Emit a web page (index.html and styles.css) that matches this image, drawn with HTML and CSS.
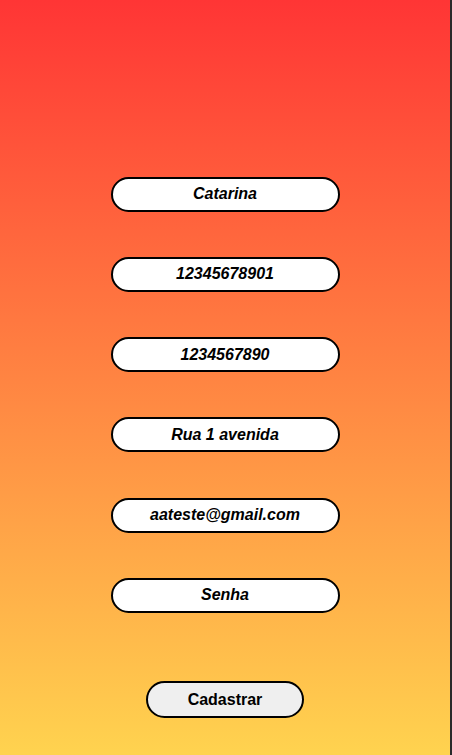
FILE: index.html
```html
<!DOCTYPE html>
<html lang="pt">
<head>
<meta charset="utf-8">
<title>Cadastro</title>
<link rel="stylesheet" href="styles.css">
</head>
<body>
<main class="page">
  <form class="form">
    <div class="field">Catarina</div>
    <div class="field">12345678901</div>
    <div class="field">1234567890</div>
    <div class="field">Rua 1 avenida</div>
    <div class="field">aateste@gmail.com</div>
    <div class="field">Senha</div>
    <button type="button" class="submit">Cadastrar</button>
  </form>
</main>
</body>
</html>
```
FILE: styles.css
```css
html {
  background: #2a2a2a;
}
body {
  margin: 0;
  display: flex;
  font-family: "Liberation Sans", Arial, sans-serif;
}
.page {
  width: 450px;
  height: 755px;
  background: linear-gradient(to bottom, #ff3535, #ffd34f);
}
.form {
  display: flex;
  flex-direction: column;
  align-items: center;
  padding-top: 176.5px;
  gap: 45.3px;
  margin: 0;
}
.field {
  box-sizing: border-box;
  width: 229px;
  height: 35px;
  border: 2px solid #000;
  border-radius: 18px;
  background: #fff;
  display: flex;
  align-items: center;
  justify-content: center;
  font-size: 16px;
  font-weight: bold;
  font-style: italic;
  color: #000;
}
.submit {
  box-sizing: border-box;
  margin-top: 23px;
  width: 158px;
  height: 37px;
  border: 2px solid #000;
  border-radius: 19px;
  background: #efefef;
  font-family: "Liberation Sans", Arial, sans-serif;
  font-size: 16px;
  font-weight: bold;
  color: #000;
  padding: 0;
}
```
